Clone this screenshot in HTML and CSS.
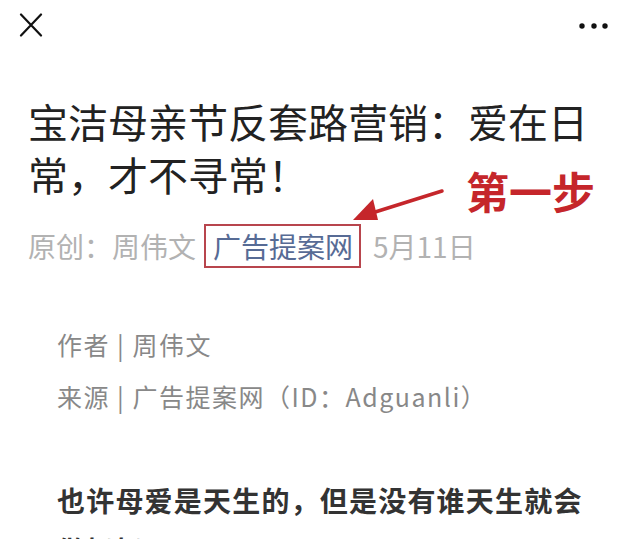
FILE: index.html
```html
<!DOCTYPE html>
<html lang="zh-CN">
<head>
<meta charset="utf-8">
<link rel="stylesheet" href="styles.css">
</head>
<body>
<div class="page">
  <header class="topbar">
    <svg class="icon-close" width="24" height="24" viewBox="0 0 24 24">
      <path d="M2 1.5 L22 22.5 M22 1.5 L2 22.5" stroke="#111" stroke-width="2.2" stroke-linecap="round" fill="none"/>
    </svg>
    <svg class="icon-more" width="36" height="8" viewBox="0 0 36 8">
      <circle cx="6" cy="4" r="2.7" fill="#111"/>
      <circle cx="18" cy="4" r="2.7" fill="#111"/>
      <circle cx="29" cy="4" r="2.7" fill="#111"/>
    </svg>
  </header>

  <h1 class="title">宝洁母亲节反套路营销：爱在日常，才不寻常！</h1>

  <div class="meta">
    <span class="meta-author">原创：周伟文</span>
    <span class="meta-account">广告提案网</span>
    <span class="meta-date">5月11日</span>
  </div>

  <div class="credits">
    <p>作者 | 周伟文</p>
    <p>来源 | 广告提案网（ID：Adguanli）</p>
  </div>

  <p class="lead">也许母爱是天生的，但是没有谁天生就会做妈妈。</p>

  <div class="annotation">
    <svg class="arrow" width="100" height="40" viewBox="0 0 100 40">
      <path d="M92 5 L22 27" stroke="#c5262b" stroke-width="3.5" stroke-linecap="round" fill="none"/>
      <path d="M3 34 L23 13 L28 34 Z" fill="#c5262b"/>
    </svg>
    <span class="step">第一步</span>
  </div>
</div>
</body>
</html>
```

FILE: styles.css
```css
html, body {
  margin: 0;
  padding: 0;
  background: #ffffff;
}

.page {
  position: relative;
  width: 640px;
  height: 539px;
  overflow: hidden;
  font-family: "Noto Sans CJK SC", "Noto Sans", sans-serif;
}

.topbar {
  height: 50px;
  padding: 0 28px 0 19px;
  display: flex;
  align-items: center;
  justify-content: space-between;
}

.icon-close {
  display: block;
}

.icon-more {
  display: block;
  margin-top: 1px;
}

.title {
  margin: 45px 0 0;
  padding: 0 28px;
  font-size: 40px;
  line-height: 53px;
  font-weight: 400;
  color: #222222;
}

.meta {
  margin-top: 23px;
  padding-left: 28px;
  height: 44px;
  display: flex;
  align-items: center;
  font-size: 28px;
  color: #b2b2b2;
}

.meta-author {
  margin-right: 8px;
}

.meta-account {
  box-sizing: border-box;
  height: 44px;
  line-height: 40px;
  padding: 0 6px 0 7px;
  border: 2px solid #b8454d;
  color: #576b95;
  margin-right: 12px;
}

.meta-date {
  color: #b2b2b2;
}

.credits {
  margin-top: 50px;
  padding-left: 57px;
  font-size: 25px;
  line-height: 52px;
  letter-spacing: 1.5px;
  color: #888888;
}

.credits p {
  margin: 0;
}

.lead {
  margin: 53px 0 0;
  padding: 0 40px 0 57px;
  font-size: 28px;
  line-height: 50px;
  letter-spacing: 1.2px;
  font-weight: 700;
  color: #333333;
}

.annotation {
  position: absolute;
  left: 350px;
  top: 166px;
  display: flex;
  align-items: flex-start;
}

.arrow {
  display: block;
  margin-top: 20px;
}

.step {
  margin-left: 16px;
  font-size: 43px;
  line-height: 48px;
  font-weight: 700;
  color: #c5262b;
}
```
